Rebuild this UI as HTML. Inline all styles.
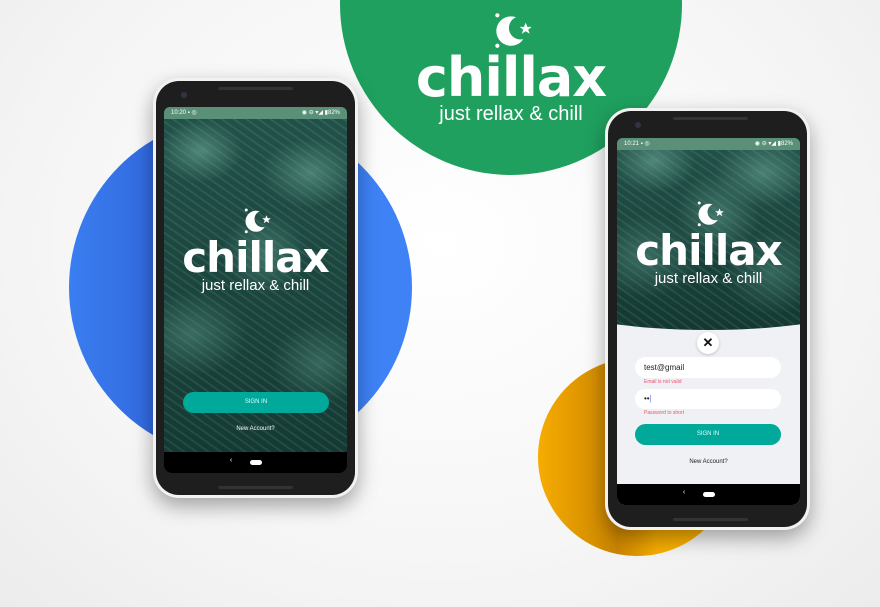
<!DOCTYPE html>
<html><head><meta charset="utf-8"><style>
*{margin:0;padding:0;box-sizing:border-box}
body{width:880px;height:607px;overflow:hidden;background:#fafafa;font-family:"Liberation Sans",sans-serif;position:relative}
.bg{position:absolute;inset:0;background:radial-gradient(ellipse at 50% 40%,#ffffff 0%,#f6f6f6 60%,#ececec 100%)}
.c{position:absolute;border-radius:50%}
.phone{position:absolute;border-radius:26px;background:#f2f2f2;box-shadow:0 8px 20px rgba(0,0,0,.35)}
.body{position:absolute;inset:3px;border-radius:23px;background:#1e1e1e}
.scr{position:absolute;overflow:hidden;background:#173f3a}
.leaf{position:absolute;inset:0;background:
radial-gradient(ellipse 60px 45px at 20% 12%,rgba(110,170,155,.6),transparent 70%),
radial-gradient(ellipse 70px 50px at 80% 18%,rgba(110,170,155,.55),transparent 70%),
radial-gradient(ellipse 60px 60px at 55% 40%,rgba(100,160,145,.5),transparent 70%),
radial-gradient(ellipse 80px 60px at 15% 62%,rgba(90,150,135,.5),transparent 70%),
radial-gradient(ellipse 70px 60px at 85% 70%,rgba(90,150,135,.45),transparent 70%),
repeating-linear-gradient(35deg,rgba(255,255,255,.08) 0 2px,transparent 2px 7px),
linear-gradient(#215249,#133832)}
.sb{position:absolute;left:0;right:0;top:0;height:12px;background:#5b9078;color:#fff;font-size:6px;line-height:12px;padding:0 7px;display:flex;justify-content:space-between}
.nav{position:absolute;left:0;right:0;bottom:0;height:21px;background:#000}
.nav i{position:absolute;left:50%;top:8px;margin-left:-6px;width:12px;height:5px;border-radius:3px;background:#fff}
.nav b{position:absolute;left:36%;top:5px;color:#fff;font-size:7px;font-weight:normal}
.logo{position:absolute;left:0;right:0;text-align:center;color:#fff}
.logo svg{display:block;margin:0 auto}
.logo .t{font-family:"DejaVu Sans",sans-serif;font-weight:bold;letter-spacing:-1px}
.btn{position:absolute;background:#00a99a;color:#dff;border-radius:11px;font-size:6px;text-align:center;line-height:21px}
.spk{position:absolute;height:3px;border-radius:2px;background:#333;}
</style></head><body>
<svg width="0" height="0" style="position:absolute"><defs>
<mask id="m"><rect width="40" height="36" fill="#fff"/><circle cx="29" cy="16" r="11" fill="#000"/></mask>
<g id="moon"><circle cx="20" cy="19" r="14" fill="#fff" mask="url(#m)"/><polygon points="34,11 35.6,15 39.8,15 36.4,17.6 37.7,21.6 34,19.2 30.3,21.6 31.6,17.6 28.2,15 32.4,15" fill="#fff"/><circle cx="7" cy="4" r="2" fill="#fff"/><circle cx="7" cy="33" r="2" fill="#fff"/></g>
</defs></svg>
<div class="bg"></div>
<div class="c" style="left:340px;top:-167px;width:342px;height:342px;background:#1fa05e"></div>
<div class="c" style="left:69px;top:116px;width:343px;height:343px;background:linear-gradient(90deg,#3a7ef0,#2a55cf 48%,#3e82f6 70%,#3e82f6)"></div>
<div class="c" style="left:538px;top:358px;width:198px;height:198px;background:linear-gradient(90deg,#f7ac00,#c98400 40%,#f6ad00 60%,#ffb400)"></div>

<div class="logo" style="left:340px;width:342px;top:11px">
<svg width="42" height="38" viewBox="0 0 40 36"><use href="#moon"/></svg>
<div class="t" style="font-size:54px;line-height:50px;margin-top:4px">chillax</div>
<div style="font-size:20px;line-height:20px;margin-top:1px">just rellax &amp; chill</div>
</div>

<div class="phone" style="left:153px;top:78px;width:205px;height:420px">
<div class="body"></div>
<div class="spk" style="left:65px;top:9px;width:75px"></div>
<div class="spk" style="left:65px;top:408px;width:75px"></div>
<div class="c" style="left:28px;top:14px;width:6px;height:6px;background:#334"></div>
<div class="scr" style="left:11px;top:29px;width:183px;height:366px;border-radius:6px 6px 8px 8px">
<div class="leaf"></div>
<div class="sb"><span>10:20 ▪ ◎</span><span>◉ ⊖ ▾◢ ▮82%</span></div>
<div class="logo" style="top:100px">
<svg width="30" height="27" viewBox="0 0 40 36"><use href="#moon"/></svg>
<div class="t" style="font-size:42px;line-height:40px;margin-top:4px">chillax</div>
<div style="font-size:15px;line-height:15px">just rellax &amp; chill</div>
</div>
<div class="btn" style="left:19px;top:285px;width:146px">SIGN IN</div>
<div style="position:absolute;left:0;right:0;top:319px;text-align:center;color:#fff;font-size:6px">New Account?</div>
<div class="nav"><b>‹</b><i></i></div>
</div>
</div>

<div class="phone" style="left:605px;top:108px;width:205px;height:422px">
<div class="body"></div>
<div class="spk" style="left:68px;top:9px;width:75px"></div>
<div class="spk" style="left:68px;top:410px;width:75px"></div>
<div class="c" style="left:30px;top:14px;width:6px;height:6px;background:#334"></div>
<div class="scr" style="left:12px;top:30px;width:183px;height:367px;border-radius:6px 6px 8px 8px;background:#f0f1f5">
<div style="position:absolute;left:-60px;top:-200px;width:303px;height:392px;border-radius:0 0 50% 50%/0 0 28px 28px;overflow:hidden"><div class="leaf" style="left:60px;right:60px;top:200px"></div></div>
<div class="sb"><span>10:21 ▪ ◎</span><span>◉ ⊖ ▾◢ ▮82%</span></div>
<div class="logo" style="top:62px">
<svg width="30" height="27" viewBox="0 0 40 36"><use href="#moon"/></svg>
<div class="t" style="font-size:42px;line-height:40px;margin-top:4px">chillax</div>
<div style="font-size:15px;line-height:15px">just rellax &amp; chill</div>
</div>
<div class="c" style="left:80px;top:194px;width:22px;height:22px;background:#fff;box-shadow:0 1px 3px rgba(0,0,0,.2);text-align:center;line-height:22px;font-size:13px;font-weight:bold;color:#111">✕</div>
<div style="position:absolute;left:18px;top:219px;width:146px;height:21px;border-radius:11px;background:#fff;font-size:8px;line-height:21px;padding-left:9px;color:#222">test@gmail</div>
<div style="position:absolute;left:27px;top:241px;font-size:5px;color:#f0506e">Email is not valid</div>
<div style="position:absolute;left:18px;top:251px;width:146px;height:20px;border-radius:10px;background:#fff;font-size:8px;line-height:20px;padding-left:9px;color:#222">••<span style="color:#6b7cf0">|</span></div>
<div style="position:absolute;left:27px;top:272px;font-size:5px;color:#f0506e">Password to short</div>
<div class="btn" style="left:18px;top:286px;width:146px">SIGN IN</div>
<div style="position:absolute;left:0;right:0;top:321px;text-align:center;color:#222;font-size:6px">New Account?</div>
<div class="nav"><b>‹</b><i></i></div>
</div>
</div>
</body></html>
